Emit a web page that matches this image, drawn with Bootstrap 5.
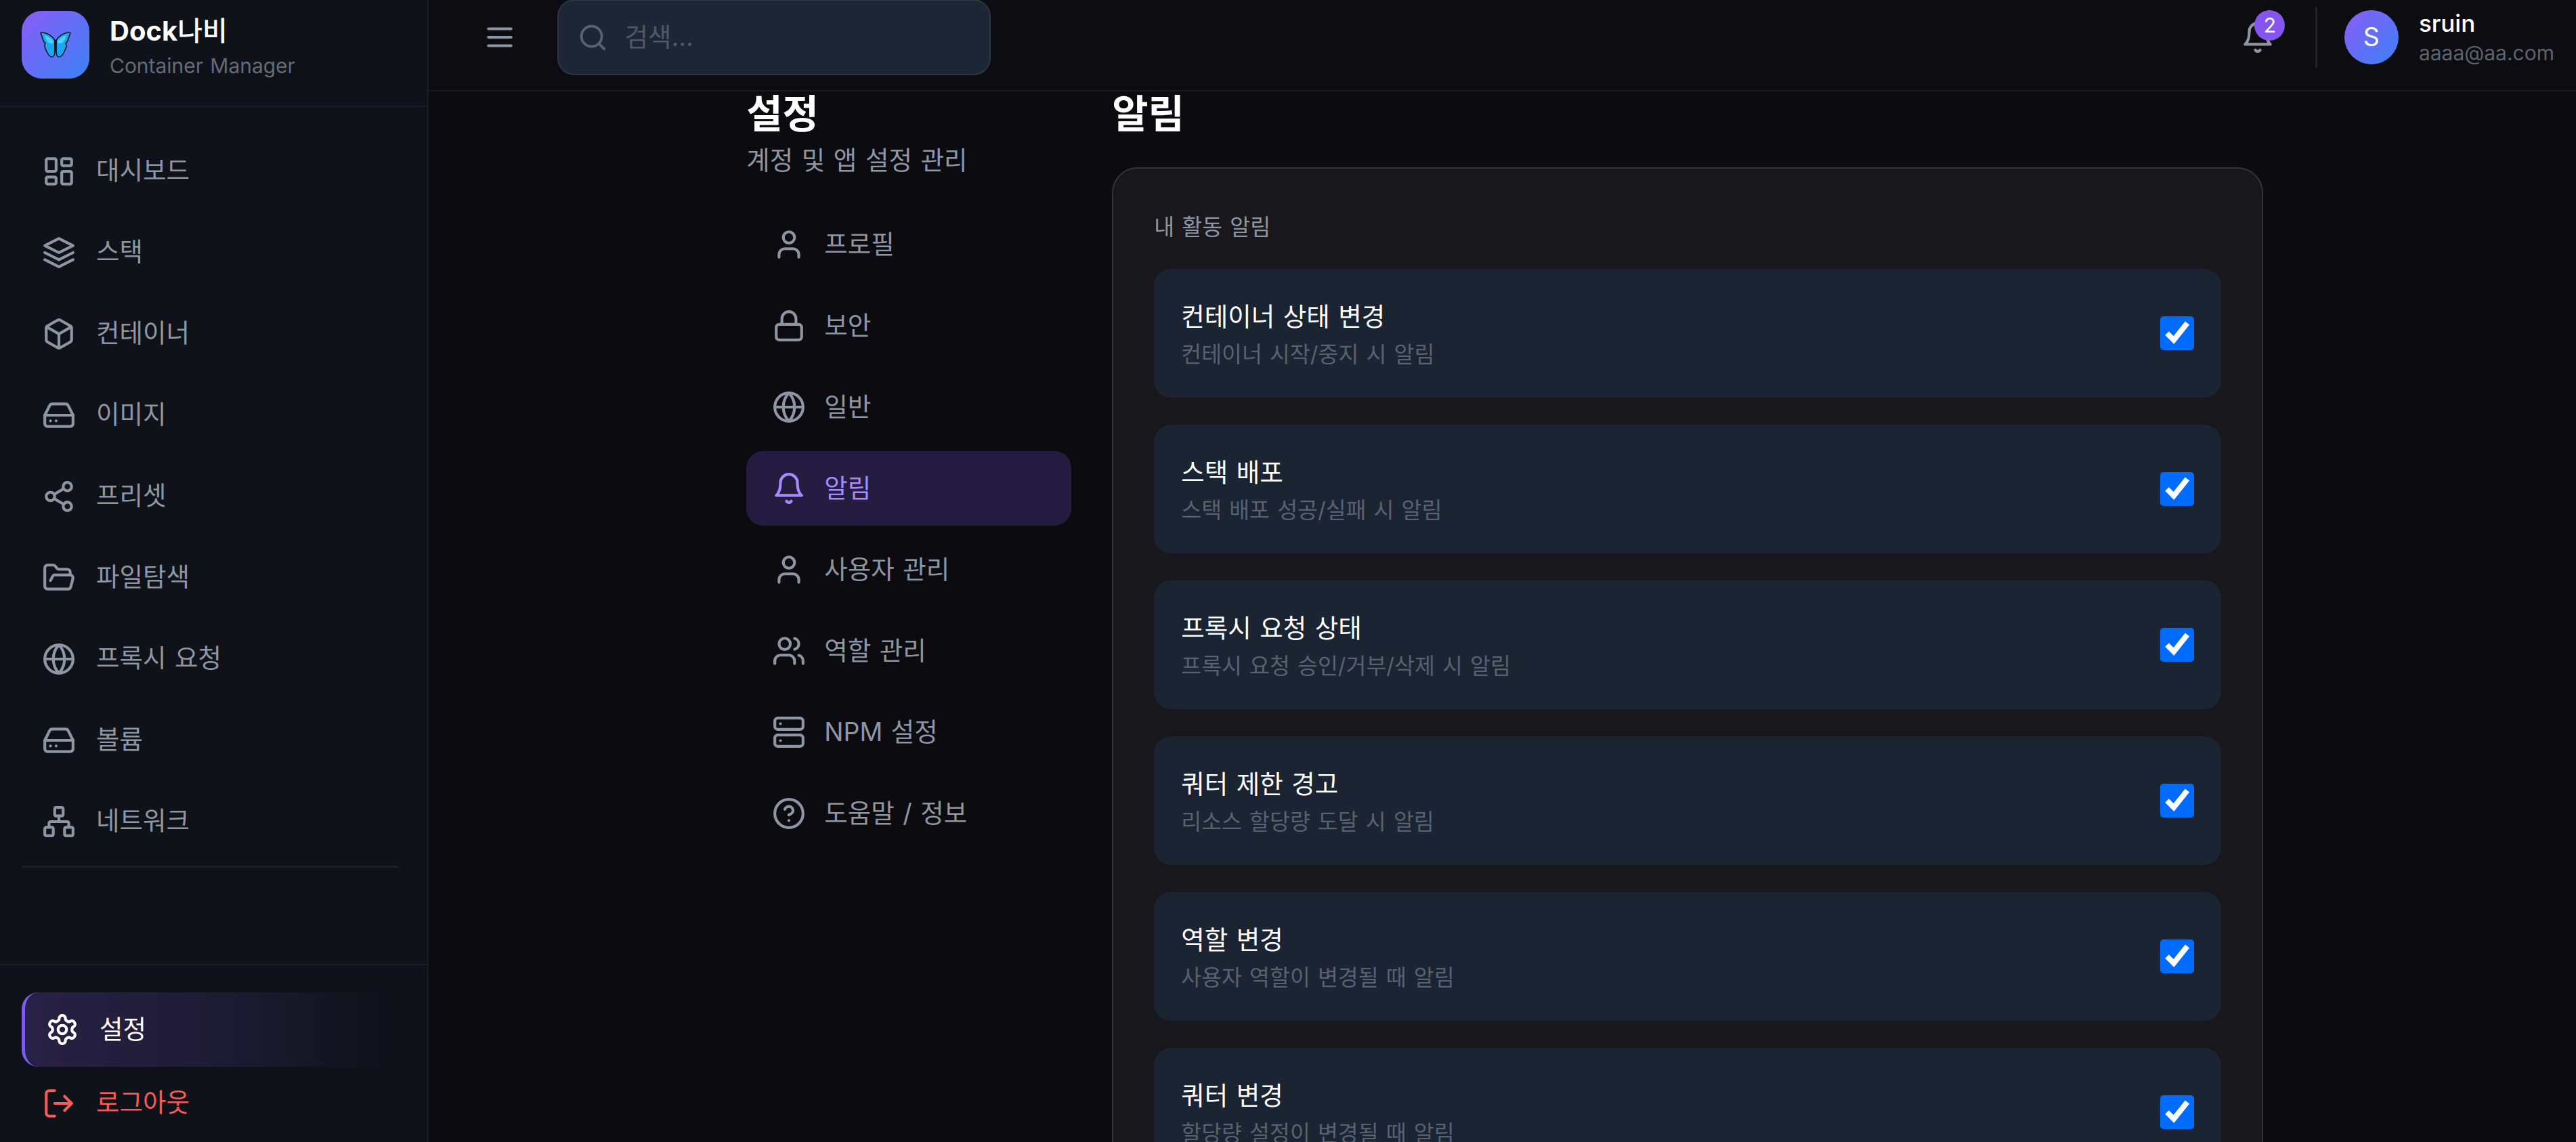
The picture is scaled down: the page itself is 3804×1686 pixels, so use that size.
<!DOCTYPE html>
<html lang="ko">
<head>
<meta charset="utf-8">
<title>Dock나비</title>
<link href="https://cdn.jsdelivr.net/npm/bootstrap@5.3.0/dist/css/bootstrap.min.css" rel="stylesheet">
<style>
html,body{height:100%;background:#0b0b10;}
body{font-family:Inter,"Noto Sans CJK KR",sans-serif;font-size:37.5px;color:#fff;overflow:hidden;word-spacing:2px;}
.ico{width:50px;height:50px;flex:none;fill:none;stroke:currentColor;stroke-width:2;stroke-linecap:round;stroke-linejoin:round;}
.shell{height:1686px;}
.side{width:632.5px;flex:none;background:#0f1219;border-right:2.5px solid #1b1d24;}
.side-head{height:157.5px;padding:16px 32px 0;gap:30px;border-bottom:2.5px solid #1b1e26;align-items:flex-start;}
.logo-box{width:100px;height:100px;border-radius:30px;background:linear-gradient(135deg,#8b5cf6,#3b82f6);}
.brand{font-size:40px;font-weight:700;line-height:50px;margin-top:5px;}
.brand-ko{font-weight:500;}
.brand-sub{font-size:30px;line-height:42px;color:#636b78;margin-top:5px;letter-spacing:-.03px;}
.side-nav{padding:42.5px 32px 0;gap:15px;}
.side-link{height:105px;padding:0 30px;gap:30px;color:#8f96a3;text-decoration:none;}
.side-rule{height:2.5px;background:#1a1d24;margin:-2px 10px 0 0;}
.side-foot{border-top:2.5px solid #1b1e26;padding:40px 32px 0;gap:0;height:263px;}
.side-active{height:110px;padding:0 30px;border-left:5px solid #7c5cf0;border-radius:25px 0 0 25px;background:linear-gradient(90deg,rgba(139,92,246,.2),rgba(139,92,246,.12) 50%,rgba(139,92,246,0) 95%);color:#fff;}
.side-out{color:#f25c5c;margin-top:1px;}
.top{height:135px;flex:none;background:#0c0c11;border-bottom:2.5px solid #1a1b20;padding:0 32px 25px 80px;}
.top-row{height:110px;}
.burger{color:#8f96a3;}
.search-box{width:640px;height:112px;margin-left:60px;background:#1c2635;border:2.5px solid #2c3644;border-radius:25px;padding:0 28px;color:#5a6371;gap:25px;}
.search-box .ico{width:45px;height:45px;}
.search-text{color:#4f5866;}
.bell-wrap{color:#8f96a3;margin-right:60px;}
.bell-count{top:-15px;left:20px;position:absolute;width:45px;height:45px;border-radius:50%;background:#8655f0;color:#fff;font-size:30px;line-height:45px;text-align:center;}
.vrule{width:2.5px;height:90px;background:#212227;}
.who{margin-left:40px;gap:30px;}
.who-pic{width:80px;height:80px;border-radius:50%;background:linear-gradient(135deg,#8b5cf6,#3b82f6);font-size:37.5px;}
.who-name{font-size:35px;font-weight:500;line-height:45px;}
.who-mail{font-size:30px;line-height:42px;color:#5b6370;}
.content-wrap{width:2240px;margin:3px auto 0;gap:60px;position:relative;left:4px;}
.col-left{width:480px;flex:none;}
.col-right{flex:1 1 0;min-width:0;}
.page-title{font-size:58px;font-weight:700;line-height:60px;margin:0;color:#fff;}
.page-sub{color:#8f96a3;line-height:56px;margin:10.5px 0 41.5px;}
.set-nav{gap:10px;}
.set-link{height:110px;padding:0 37.5px;gap:27.5px;border-radius:25px;color:#8f96a3;text-decoration:none;}
.set-on{background:#251c42;color:#a78bfa;}
.panel{margin-top:49px;background:#18181c;border:2.5px solid #333338;border-radius:37.5px;padding:60px;}
.panel-label{font-size:32.5px;line-height:45px;color:#8f96a3;margin:3.5px 0 39.5px;}
.opt-list{gap:40px;}
.opt-row{height:190px;flex:none;background:#1b2433;border-radius:25px;padding:0 40px;}
.opt-title{line-height:56px;color:#fff;margin-top:5px;}
.opt-desc{font-size:32.5px;line-height:50px;color:#586170;margin-top:3px;}
.opt-check{width:20px;height:20px;zoom:2.5;margin:0;accent-color:#006cff;flex:none;}
</style>
</head>
<body>
<svg width="0" height="0" class="position-absolute">
<defs>
<symbol id="i-dash" viewBox="0 0 24 24"><rect x="3" y="3" width="7" height="9" rx="1"/><rect x="14" y="3" width="7" height="5" rx="1"/><rect x="14" y="12" width="7" height="9" rx="1"/><rect x="3" y="16" width="7" height="5" rx="1"/></symbol>
<symbol id="i-layers" viewBox="0 0 24 24"><polygon points="12 2 2 7 12 12 22 7 12 2"/><polyline points="2 17 12 22 22 17"/><polyline points="2 12 12 17 22 12"/></symbol>
<symbol id="i-box" viewBox="0 0 24 24"><path d="M21 8a2 2 0 0 0-1-1.73l-7-4a2 2 0 0 0-2 0l-7 4A2 2 0 0 0 3 8v8a2 2 0 0 0 1 1.73l7 4a2 2 0 0 0 2 0l7-4A2 2 0 0 0 21 16Z"/><path d="m3.3 7 8.7 5 8.7-5"/><path d="M12 22V12"/></symbol>
<symbol id="i-drive" viewBox="0 0 24 24"><line x1="22" y1="12" x2="2" y2="12"/><path d="M5.45 5.11 2 12v6a2 2 0 0 0 2 2h16a2 2 0 0 0 2-2v-6l-3.45-6.89A2 2 0 0 0 16.76 4H7.24a2 2 0 0 0-1.79 1.11z"/><line x1="6" y1="16" x2="6.01" y2="16"/><line x1="10" y1="16" x2="10.01" y2="16"/></symbol>
<symbol id="i-share" viewBox="0 0 24 24"><circle cx="18" cy="5" r="3"/><circle cx="6" cy="12" r="3"/><circle cx="18" cy="19" r="3"/><line x1="8.59" y1="13.51" x2="15.42" y2="17.49"/><line x1="15.41" y1="6.51" x2="8.59" y2="10.49"/></symbol>
<symbol id="i-folder" viewBox="0 0 24 24"><path d="m6 14 1.5-2.9A2 2 0 0 1 9.24 10H20a2 2 0 0 1 1.94 2.5l-1.54 6a2 2 0 0 1-1.95 1.5H4a2 2 0 0 1-2-2V5a2 2 0 0 1 2-2h3.9a2 2 0 0 1 1.69.9l.81 1.2a2 2 0 0 0 1.67.9H18a2 2 0 0 1 2 2v2"/></symbol>
<symbol id="i-globe" viewBox="0 0 24 24"><circle cx="12" cy="12" r="10"/><path d="M12 2a14.5 14.5 0 0 0 0 20 14.5 14.5 0 0 0 0-20"/><path d="M2 12h20"/></symbol>
<symbol id="i-net" viewBox="0 0 24 24"><rect x="16" y="16" width="6" height="6" rx="1"/><rect x="2" y="16" width="6" height="6" rx="1"/><rect x="9" y="2" width="6" height="6" rx="1"/><path d="M5 16v-3a1 1 0 0 1 1-1h12a1 1 0 0 1 1 1v3"/><path d="M12 12V8"/></symbol>
<symbol id="i-gear" viewBox="0 0 24 24"><path d="M12.22 2h-.44a2 2 0 0 0-2 2v.18a2 2 0 0 1-1 1.73l-.43.25a2 2 0 0 1-2 0l-.15-.08a2 2 0 0 0-2.73.73l-.22.38a2 2 0 0 0 .73 2.73l.15.1a2 2 0 0 1 1 1.72v.51a2 2 0 0 1-1 1.74l-.15.09a2 2 0 0 0-.73 2.73l.22.38a2 2 0 0 0 2.73.73l.15-.08a2 2 0 0 1 2 0l.43.25a2 2 0 0 1 1 1.73V20a2 2 0 0 0 2 2h.44a2 2 0 0 0 2-2v-.18a2 2 0 0 1 1-1.73l.43-.25a2 2 0 0 1 2 0l.15.08a2 2 0 0 0 2.73-.73l.22-.39a2 2 0 0 0-.73-2.73l-.15-.08a2 2 0 0 1-1-1.74v-.5a2 2 0 0 1 1-1.74l.15-.09a2 2 0 0 0 .73-2.73l-.22-.38a2 2 0 0 0-2.73-.73l-.15.08a2 2 0 0 1-2 0l-.43-.25a2 2 0 0 1-1-1.73V4a2 2 0 0 0-2-2z"/><circle cx="12" cy="12" r="3"/></symbol>
<symbol id="i-out" viewBox="0 0 24 24"><path d="M9 21H5a2 2 0 0 1-2-2V5a2 2 0 0 1 2-2h4"/><polyline points="16 17 21 12 16 7"/><line x1="21" y1="12" x2="9" y2="12"/></symbol>
<symbol id="i-menu" viewBox="0 0 24 24"><line x1="4" y1="6" x2="20" y2="6"/><line x1="4" y1="12" x2="20" y2="12"/><line x1="4" y1="18" x2="20" y2="18"/></symbol>
<symbol id="i-search" viewBox="0 0 24 24"><circle cx="11" cy="11" r="8"/><path d="m21 21-4.3-4.3"/></symbol>
<symbol id="i-bell" viewBox="0 0 24 24"><path d="M6 8a6 6 0 0 1 12 0c0 7 3 9 3 9H3s3-2 3-9"/><path d="M10.3 21a1.94 1.94 0 0 0 3.4 0"/></symbol>
<symbol id="i-user" viewBox="0 0 24 24"><path d="M19 21v-2a4 4 0 0 0-4-4H9a4 4 0 0 0-4 4v2"/><circle cx="12" cy="7" r="4"/></symbol>
<symbol id="i-lock" viewBox="0 0 24 24"><rect x="3" y="11" width="18" height="11" rx="2"/><path d="M7 11V7a5 5 0 0 1 10 0v4"/></symbol>
<symbol id="i-users" viewBox="0 0 24 24"><path d="M16 21v-2a4 4 0 0 0-4-4H6a4 4 0 0 0-4 4v2"/><circle cx="9" cy="7" r="4"/><path d="M22 21v-2a4 4 0 0 0-3-3.87"/><path d="M16 3.13a4 4 0 0 1 0 7.75"/></symbol>
<symbol id="i-server" viewBox="0 0 24 24"><rect x="2" y="2" width="20" height="8" rx="2"/><rect x="2" y="14" width="20" height="8" rx="2"/><line x1="6" y1="6" x2="6.01" y2="6"/><line x1="6" y1="18" x2="6.01" y2="18"/></symbol>
<symbol id="i-help" viewBox="0 0 24 24"><circle cx="12" cy="12" r="10"/><path d="M9.09 9a3 3 0 0 1 5.83 1c0 2-3 3-3 3"/><path d="M12 17h.01"/></symbol>
</defs>
</svg>

<div class="shell d-flex overflow-hidden">
  <aside class="side d-flex flex-column">
    <div class="side-head d-flex">
      <div class="logo-box d-flex align-items-center justify-content-center">
        <svg width="46" height="38" viewBox="0 0 46 38">
          <path d="M22 13C20 8 12 1 2 1c-2 0 0 3 1 6 1 4 2 8 5 10-2 2-1 6 1 10 2 5 5 10 9 10 3 0 4-4 4-9z" fill="#1ca6f2" stroke="#14141c" stroke-width="1.6"/>
          <path d="M24 13C26 8 34 1 44 1c2 0 0 3-1 6-1 4-2 8-5 10 2 2 1 6-1 10-2 5-5 10-9 10-3 0-4-4-4-9z" fill="#1ca6f2" stroke="#14141c" stroke-width="1.6"/>
          <path d="M20 14C17 10 12 6 7 5c1 5 4 11 8 12 3 1 5 0 5-3zM26 14c3-4 8-8 13-9-1 5-4 11-8 12-3 1-5 0-5-3z" fill="#4fd0fb"/>
          <path d="M23 12c-1 0-2 1-2 3l1 14h2l1-14c0-2-1-3-2-3z" fill="#1c1620"/>
        </svg>
      </div>
      <div>
        <div class="brand">Dock<span class="brand-ko">나비</span></div>
        <div class="brand-sub">Container Manager</div>
      </div>
    </div>
    <nav class="side-nav d-flex flex-column flex-grow-1">
      <a class="side-link d-flex align-items-center" href="#"><svg class="ico"><use href="#i-dash"/></svg>대시보드</a>
      <a class="side-link d-flex align-items-center" href="#"><svg class="ico"><use href="#i-layers"/></svg>스택</a>
      <a class="side-link d-flex align-items-center" href="#"><svg class="ico"><use href="#i-box"/></svg>컨테이너</a>
      <a class="side-link d-flex align-items-center" href="#"><svg class="ico"><use href="#i-drive"/></svg>이미지</a>
      <a class="side-link d-flex align-items-center" href="#"><svg class="ico"><use href="#i-share"/></svg>프리셋</a>
      <a class="side-link d-flex align-items-center" href="#"><svg class="ico"><use href="#i-folder"/></svg>파일탐색</a>
      <a class="side-link d-flex align-items-center" href="#"><svg class="ico"><use href="#i-globe"/></svg>프록시 요청</a>
      <a class="side-link d-flex align-items-center" href="#"><svg class="ico"><use href="#i-drive"/></svg>볼륨</a>
      <a class="side-link d-flex align-items-center" href="#"><svg class="ico"><use href="#i-net"/></svg>네트워크</a>
      <div class="side-rule"></div>
    </nav>
    <div class="side-foot d-flex flex-column">
      <a class="side-link side-active d-flex align-items-center" href="#"><svg class="ico"><use href="#i-gear"/></svg>설정</a>
      <a class="side-link side-out d-flex align-items-center" href="#"><svg class="ico"><use href="#i-out"/></svg>로그아웃</a>
    </div>
  </aside>

  <div class="d-flex flex-column flex-grow-1">
    <header class="top">
      <div class="top-row d-flex align-items-center">
        <svg class="ico burger"><use href="#i-menu"/></svg>
        <div class="search-box d-flex align-items-center">
          <svg class="ico"><use href="#i-search"/></svg>
          <span class="search-text">검색...</span>
        </div>
        <div class="ms-auto d-flex align-items-center">
          <div class="bell-wrap position-relative d-flex">
            <svg class="ico"><use href="#i-bell"/></svg>
            <span class="bell-count">2</span>
          </div>
          <div class="vrule"></div>
          <div class="who d-flex align-items-center">
            <div class="who-pic d-flex align-items-center justify-content-center">S</div>
            <div>
              <div class="who-name">sruin</div>
              <div class="who-mail">aaaa@aa.com</div>
            </div>
          </div>
        </div>
      </div>
    </header>
    <main class="flex-grow-1">
      <div class="content-wrap d-flex">
        <div class="col-left">
          <h1 class="page-title">설정</h1>
          <div class="page-sub">계정 및 앱 설정 관리</div>
          <nav class="set-nav d-flex flex-column">
            <a class="set-link d-flex align-items-center" href="#"><svg class="ico"><use href="#i-user"/></svg>프로필</a>
            <a class="set-link d-flex align-items-center" href="#"><svg class="ico"><use href="#i-lock"/></svg>보안</a>
            <a class="set-link d-flex align-items-center" href="#"><svg class="ico"><use href="#i-globe"/></svg>일반</a>
            <a class="set-link set-on d-flex align-items-center" href="#"><svg class="ico"><use href="#i-bell"/></svg>알림</a>
            <a class="set-link d-flex align-items-center" href="#"><svg class="ico"><use href="#i-user"/></svg>사용자 관리</a>
            <a class="set-link d-flex align-items-center" href="#"><svg class="ico"><use href="#i-users"/></svg>역할 관리</a>
            <a class="set-link d-flex align-items-center" href="#"><svg class="ico"><use href="#i-server"/></svg>NPM 설정</a>
            <a class="set-link d-flex align-items-center" href="#"><svg class="ico"><use href="#i-help"/></svg>도움말 / 정보</a>
          </nav>
        </div>
        <div class="col-right">
          <h2 class="page-title">알림</h2>
          <section class="panel">
            <div class="panel-label">내 활동 알림</div>
            <div class="opt-list d-flex flex-column">
              <div class="opt-row d-flex align-items-center justify-content-between"><div><div class="opt-title">컨테이너 상태 변경</div><div class="opt-desc">컨테이너 시작/중지 시 알림</div></div><input class="opt-check" type="checkbox" checked aria-label="컨테이너 상태 변경"></div>
              <div class="opt-row d-flex align-items-center justify-content-between"><div><div class="opt-title">스택 배포</div><div class="opt-desc">스택 배포 성공/실패 시 알림</div></div><input class="opt-check" type="checkbox" checked aria-label="스택 배포"></div>
              <div class="opt-row d-flex align-items-center justify-content-between"><div><div class="opt-title">프록시 요청 상태</div><div class="opt-desc">프록시 요청 승인/거부/삭제 시 알림</div></div><input class="opt-check" type="checkbox" checked aria-label="프록시 요청 상태"></div>
              <div class="opt-row d-flex align-items-center justify-content-between"><div><div class="opt-title">쿼터 제한 경고</div><div class="opt-desc">리소스 할당량 도달 시 알림</div></div><input class="opt-check" type="checkbox" checked aria-label="쿼터 제한 경고"></div>
              <div class="opt-row d-flex align-items-center justify-content-between"><div><div class="opt-title">역할 변경</div><div class="opt-desc">사용자 역할이 변경될 때 알림</div></div><input class="opt-check" type="checkbox" checked aria-label="역할 변경"></div>
              <div class="opt-row d-flex align-items-center justify-content-between"><div><div class="opt-title">쿼터 변경</div><div class="opt-desc">할당량 설정이 변경될 때 알림</div></div><input class="opt-check" type="checkbox" checked aria-label="쿼터 변경"></div>
            </div>
          </section>
        </div>
      </div>
    </main>
  </div>
</div>
<script src="https://cdn.jsdelivr.net/npm/bootstrap@5.3.0/dist/js/bootstrap.bundle.min.js"></script>
</body>
</html>
